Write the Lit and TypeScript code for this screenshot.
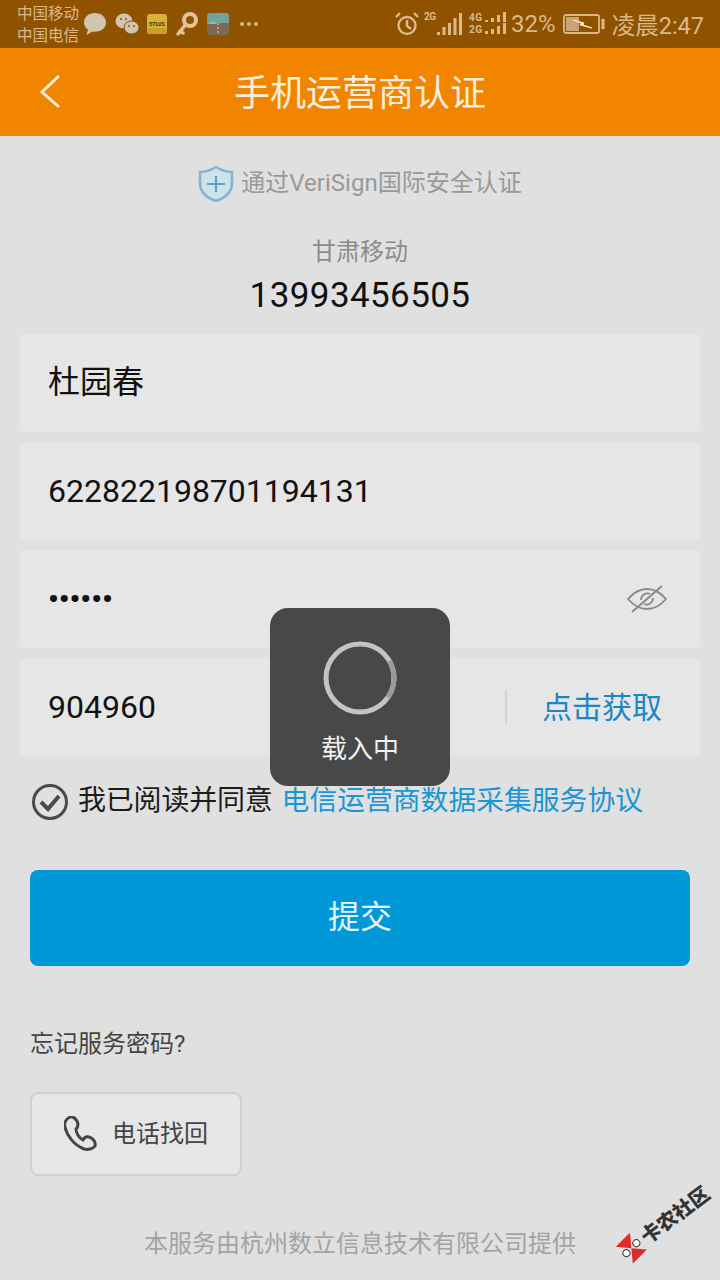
import { LitElement, html, css, svg } from "lit";
import { customElement } from "lit/decorators.js";

const C = "#dcb98a";
const bars = (hs: number[], bottom: number, x0: number, step: number, w: number) =>
  hs.map((h, i) => svg`<rect x="${x0 + i * step}" y="${bottom - h}" width="${w}" height="${h}" fill="${C}"/>`);

@customElement("app-root")
export class AppRoot extends LitElement {
  static styles = css`
    :host {
      display: block;
      width: 720px;
      height: 1280px;
      position: relative;
      overflow: hidden;
      background: #e0e0e0;
      font-family: Roboto, "Noto Sans CJK SC", sans-serif;
    }
    .status {
      height: 48px;
      background: #8f5300;
      color: #dcb98a;
      display: flex;
      align-items: center;
      padding: 0 16px 0 17px;
      box-sizing: border-box;
    }
    .carriers { font-size: 15.5px; line-height: 22px; width: 66px; padding-top: 2px; color: #d8b88c; white-space: nowrap; }
    .left { display: flex; align-items: center; gap: 8px; }
    .left svg { display: block; }
    .right { margin-left: auto; display: flex; align-items: center; }
    .right svg { display: block; }
    .sig2 { margin-left: 4px; }
    .sig4 { margin-left: 6px; }
    .pct { font-size: 24px; margin-left: 3px; color: #dcb98a; }
    .batt { margin-left: 7px; }
    .time { font-size: 23.5px; margin-left: 7px; color: #dcb98a; white-space: nowrap; }
    .more { margin-left: 2px; }
    .header {
      height: 88px;
      box-sizing: border-box;
      padding-bottom: 4px;
      background: #f28500;
      display: flex;
      align-items: center;
      justify-content: center;
      position: relative;
      color: #fbeedd;
      font-size: 36px;
    }
    .back { position: absolute; left: 40px; top: 27px; }
    .verify {
      display: flex;
      justify-content: center;
      align-items: center;
      gap: 7px;
      margin-top: 29px;
      height: 38px;
      font-size: 24px;
      color: #999;
    }
    .verify span { margin-bottom: 8px; }
    .carrier { text-align: center; font-size: 24px; color: #8c8c8c; margin-top: 31px; line-height: 36px; height: 36px; }
    .phone { text-align: center; font-size: 35px; color: #111; line-height: 46px; margin-top: 3px; letter-spacing: 0.4px; }
    .fields { margin: 15px 20px 0; display: flex; flex-direction: column; gap: 10px; }
    .field {
      height: 98px;
      background: #e6e6e6;
      border-radius: 4px;
      display: flex;
      align-items: center;
      padding: 0 38px 0 28px;
      color: #111;
      font-size: 32px;
      box-sizing: border-box;
    }
    .name { padding-bottom: 8px; }
    .dots { font-size: 30px; font-weight: 700; line-height: 1; }
    .eye { margin-left: auto; margin-right: -6px; display: block; }
    .sep { margin-left: auto; width: 2px; height: 34px; background: #d4d4d4; margin-right: 35px; }
    .get { color: #1b86c4; font-size: 30px; margin-bottom: 4px; }
    .agree { display: flex; align-items: center; margin: 24px 0 0 32px; height: 38px; font-size: 28px; color: #1c1c1c; }
    .agree svg { margin: 5px 10px 0 0; display: block; }
    .read { letter-spacing: -0.2px; margin-bottom: 2px; }
    .link { color: #1a97d3; margin: 0 0 2px 9px; font-size: 27.8px; }
    .submit {
      margin: 52px 30px 0;
      height: 96px;
      box-sizing: border-box;
      padding-bottom: 8px;
      background: #0098d7;
      border-radius: 8px;
      color: #e6f4fa;
      font-size: 32px;
      display: flex;
      align-items: center;
      justify-content: center;
    }
    .forgot { margin: 59px 0 0 30px; font-size: 24px; color: #444; line-height: 38px; }
    .recover {
      margin: 29px 0 0 30px;
      width: 212px;
      height: 84px;
      box-sizing: border-box;
      background: #e6e6e6;
      border: 2px solid #cfcfcf;
      border-radius: 8px;
      display: flex;
      align-items: center;
      padding-left: 32px;
      gap: 14px;
      font-size: 24px;
      color: #444;
    }
    .recover svg { display: block; }
    .recover span { margin-bottom: 6px; }
    .foot { margin-top: 49px; text-align: center; font-size: 24px; color: #a3a3a3; line-height: 38px; }
    .toast {
      position: absolute;
      left: 270px;
      top: 608px;
      width: 180px;
      height: 178px;
      border-radius: 18px;
      background: #484848;
      display: flex;
      flex-direction: column;
      align-items: center;
      color: #f2f2f2;
      font-size: 26px;
    }
    .toast svg { margin-top: 33px; display: block; }
    .toast span { margin-top: 15px; line-height: 38px; }
    .wm {
      position: absolute;
      left: 621px;
      top: 1241px;
      display: flex;
      align-items: center;
      white-space: nowrap;
      transform: rotate(-37deg);
      transform-origin: left center;
      font-size: 20px;
      font-weight: 900;
      line-height: 30px;
      color: #333;
      gap: 2px;
    }
    .wm svg { display: block; }
  `;

  render() {
    return html`
      <div class="status">
        <div class="carriers">中国移动<br />中国电信</div>
        <div class="left">
          <svg width="24" height="24" viewBox="0 0 24 24"><path d="M12 1C5.500 1 1 5 1 10.500c0 3.200 1.600 5.600 4 7.200L3.500 23l6-3.400c.8.100 1.700.2 2.500.2 6.300 0 11-4 11-9.300S18.300 1 12 1z" fill="#d3c4ae"/></svg>
          <svg width="24" height="24" viewBox="0 0 24 24"><ellipse cx="9" cy="9" rx="8.500" ry="7.500" fill="#d3c4ae"/><ellipse cx="16.500" cy="15.500" rx="7.500" ry="6.500" fill="#d3c4ae" stroke="#8f5300"/><circle cx="6" cy="7" r="1" fill="#8f5300"/><circle cx="11" cy="7" r="1" fill="#8f5300"/><circle cx="14" cy="14" r="1" fill="#8f5300"/><circle cx="19" cy="14" r="1" fill="#8f5300"/></svg>
          <svg width="20" height="20" viewBox="0 0 20 20"><rect width="20" height="20" rx="3" fill="#d9b232"/><rect y="14" width="20" height="6" rx="2" fill="#c9a02a"/><text x="2" y="11.500" font-size="6" font-weight="700" fill="#4a3c10" textLength="16">5TLVS</text></svg>
          <svg width="24" height="26" viewBox="0 0 24 26"><circle cx="15" cy="9" r="6" fill="#8f5300" stroke="#e0c39a" stroke-width="4"/><path d="M11 13 3 23M5 20l3 2" stroke="#e0c39a" stroke-width="3.500" fill="none" stroke-linecap="round"/></svg>
          <svg width="22" height="22" viewBox="0 0 22 22"><rect width="22" height="22" rx="3" fill="#7e6a54"/><path d="M0 3a3 3 0 0 1 3-3h16a3 3 0 0 1 3 3v7H0z" fill="#6fa39f"/><path d="M0 11l6-3 4 3z" fill="#b9b08a"/><path d="M11 10v10" stroke="#ddd" stroke-dasharray="2 2"/></svg>
          <svg class="more" width="20" height="6" viewBox="0 0 20 6"><circle cx="3" cy="3" r="2" fill="#d8b88c"/><circle cx="10" cy="3" r="2" fill="#d8b88c"/><circle cx="17" cy="3" r="2" fill="#d8b88c"/></svg>
        </div>
        <div class="right">
          <svg width="26" height="26" viewBox="0 0 26 26" fill="none" stroke="#dcb98a" stroke-width="2.400"><circle cx="13" cy="14.500" r="8.500"/><path d="M13 9v6l4 3M2 6l4-4M24 6l-4-4"/></svg>
          <svg class="sig2" width="38" height="26" viewBox="0 0 38 26"><text x="0" y="9" font-size="10" font-weight="700" fill="${C}" textLength="12">2G</text>${bars([3, 8, 12, 17, 22], 24, 13, 5.500, 3)}</svg>
          <svg class="sig4" width="40" height="26" viewBox="0 0 40 26"><text x="1" y="10" font-size="10" font-weight="700" fill="${C}" textLength="13">4G</text><text x="1" y="22" font-size="10" font-weight="700" fill="${C}" textLength="13">2G</text>${bars([2, 4, 7, 10], 11, 17, 6, 3)}${bars([3, 5, 8, 11], 23, 17, 6, 3)}</svg>
          <span class="pct">32%</span>
          <svg class="batt" width="42" height="22" viewBox="0 0 42 22" fill="none"><rect x="1" y="2" width="35" height="18" rx="2" stroke="${C}" stroke-width="1.800"/><rect x="3" y="4" width="13" height="14" fill="#c9a371"/><path d="M10 7l11 3-1 2 9 3-12-3 1-2z" fill="#f3e4cc" stroke="#f3e4cc"/><rect x="38.500" y="6" width="3" height="10" fill="${C}"/></svg>
          <span class="time">凌晨2:47</span>
        </div>
      </div>
      <div class="header">
        <svg class="back" width="22" height="36" viewBox="0 0 22 36" fill="none" stroke="#fbeedd" stroke-width="3"><path d="M19 1 2 17l17 15"/></svg>
        手机运营商认证
      </div>
      <div class="verify">
        <svg width="36" height="38" viewBox="0 0 36 38" fill="none"><path d="M18 2C13 5 7 7 2 7v11c0 9 7 15 16 18 9-3 16-9 16-18V7c-5 0-11-2-16-5z" fill="#cde2ea" stroke="#7fb5cf" stroke-width="2.500"/><path d="M18 11v16M9 19h18" stroke="#5fa7c8" stroke-width="2.200"/></svg>
        <span>通过VeriSign国际安全认证</span>
      </div>
      <div class="carrier">甘肃移动</div>
      <div class="phone">13993456505</div>
      <div class="fields">
        <div class="field name">杜园春</div>
        <div class="field">622822198701194131</div>
        <div class="field">
          <span class="dots">••••••</span>
          <svg class="eye" width="42" height="28" viewBox="0 0 42 28" fill="none" stroke="#8a8a8a" stroke-width="1.800"><path d="M2 14C8 7 14 4 21 4s13 3 19 10c-6 7-12 10-19 10S8 21 2 14z"/><path d="M15 15a6.500 6.500 0 0 1 9-6M27 13a6.500 6.500 0 0 1-9 6"/><path d="M36 1 6 27" stroke-width="2"/></svg>
        </div>
        <div class="field">904960<span class="sep"></span><span class="get">点击获取</span></div>
      </div>
      <div class="agree">
        <svg width="36" height="36" viewBox="0 0 36 36" fill="none" stroke="#4a4a4a"><circle cx="18" cy="18" r="16.500" stroke-width="3"/><path d="M9 18l7 7L27 12" stroke-width="4"/></svg>
        <span class="read">我已阅读并同意</span><span class="link">电信运营商数据采集服务协议</span>
      </div>
      <div class="submit">提交</div>
      <div class="forgot">忘记服务密码?</div>
      <div class="recover">
        <svg width="34" height="36" viewBox="0 0 34 36" fill="none" stroke="#444" stroke-width="3" stroke-linecap="round" stroke-linejoin="round"><path d="M6 1C2 3 0 7 1 11c2 9 9 18 19 22 4 1 9 0 11-3 1-4-2-8-6-9-3-1-5 1-6 3-4-2-7-7-7-11 2-2 3-4 1-8-2-3-4-5-7-4z"/></svg>
        <span>电话找回</span>
      </div>
      <div class="foot">本服务由杭州数立信息技术有限公司提供</div>
      <div class="toast">
        <svg width="74" height="74" viewBox="0 0 74 74" fill="none"><circle cx="37" cy="37" r="34" stroke="#c4c4c4" stroke-width="5"/><path d="M66.400 20A34 34 0 0 1 64.900 56.500" stroke="#9a9a9a" stroke-width="5"/></svg>
        <span>载入中</span>
      </div>
      <div class="wm">
        <svg width="26" height="26" viewBox="0 0 26 26"><g transform="rotate(82 13 13)"><path d="M1 3l12 10L1 23zM25 3 13 13l12 10z" fill="#e02a2a"/><circle cx="13" cy="6" r="3.500" fill="#fff" stroke="#333"/><circle cx="13" cy="20" r="3.500" fill="#fff" stroke="#333"/></g></svg>
        卡农社区
      </div>
    `;
  }
}
